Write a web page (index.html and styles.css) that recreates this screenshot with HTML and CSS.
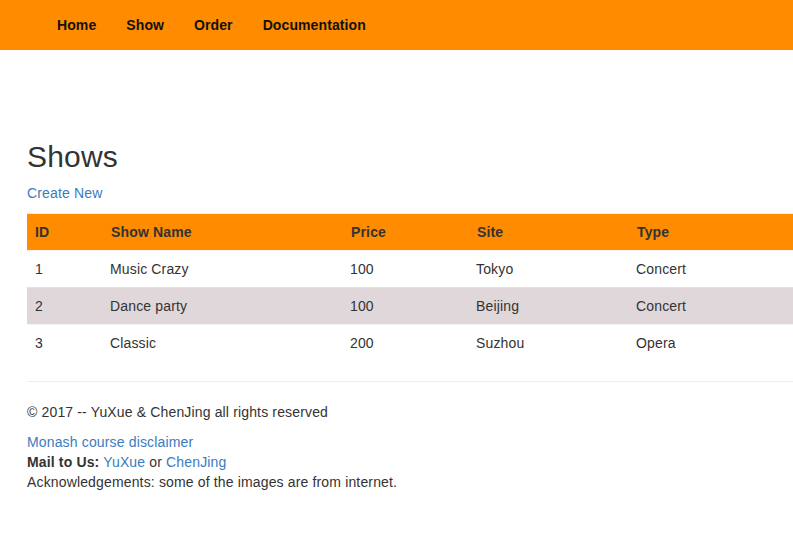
FILE: index.html
```html
<!DOCTYPE html>
<html>
<head>
<meta charset="utf-8">
<title>Shows</title>
<link rel="stylesheet" href="styles.css">
</head>
<body>
<div class="page">
  <nav class="navbar">
    <ul class="nav-links">
      <li><a href="#">Home</a></li>
      <li><a href="#">Show</a></li>
      <li><a href="#">Order</a></li>
      <li><a href="#">Documentation</a></li>
    </ul>
  </nav>
  <main class="content">
    <h2 class="title">Shows</h2>
    <p class="para"><a class="link" href="#">Create New</a></p>
    <table class="shows">
      <thead>
        <tr>
          <th class="c-id">ID</th>
          <th class="c-name">Show Name</th>
          <th class="c-price">Price</th>
          <th class="c-site">Site</th>
          <th class="c-type">Type</th>
        </tr>
      </thead>
      <tbody>
        <tr><td>1</td><td>Music Crazy</td><td>100</td><td>Tokyo</td><td>Concert</td></tr>
        <tr class="alt"><td>2</td><td>Dance party</td><td>100</td><td>Beijing</td><td>Concert</td></tr>
        <tr><td>3</td><td>Classic</td><td>200</td><td>Suzhou</td><td>Opera</td></tr>
      </tbody>
    </table>
    <hr class="rule">
    <footer class="footer">
      <p class="para">&copy; 2017 -- YuXue &amp; ChenJing all rights reserved</p>
      <div class="line"><a class="link" href="#">Monash course disclaimer</a></div>
      <div class="line"><strong>Mail to Us:</strong> <a class="link" href="#">YuXue</a> or <a class="link" href="#">ChenJing</a></div>
      <div class="line">Acknowledgements: some of the images are from internet.</div>
    </footer>
  </main>
</div>
</body>
</html>
```
FILE: styles.css
```css
html, body {
  margin: 0;
  padding: 0;
  background: #fff;
}
body {
  font-family: "Liberation Sans", Arial, sans-serif;
  font-size: 14px;
  line-height: 20px;
  color: #333;
  letter-spacing: 0.15px;
  overflow: hidden;
}
.page {
  width: 793px;
  overflow: hidden;
}
.navbar {
  height: 50px;
  background: #ff8c00;
  padding-left: 42px;
}
.nav-links {
  list-style: none;
  margin: 0;
  padding: 0;
  display: flex;
}
.nav-links a {
  display: block;
  padding: 15px 15px;
  line-height: 20px;
  font-weight: bold;
  color: #111;
  letter-spacing: 0.1px;
  text-decoration: none;
}
.content {
  padding: 90px 0 0 27px;
}
.title {
  margin: 0 0 10px;
  font-size: 30px;
  font-weight: 500;
  line-height: 33px;
  color: #333;
  letter-spacing: 0.2px;
}
.para {
  margin: 0 0 10px;
}
.link {
  color: #3a7bbf;
  text-decoration: none;
}
.shows {
  width: 1100px;
  border-collapse: collapse;
  border-spacing: 0;
  margin-bottom: 20px;
  border-top: 1px solid #eee;
}
.shows th {
  background: #ff8c00;
  color: #333;
  font-weight: bold;
  text-align: left;
  padding: 8px;
  line-height: 20px;
}
.shows td {
  padding: 8px 8px 8px 7px;
  line-height: 20px;
  border-top: 1px solid #f2f2f2;
}
.shows td:first-child {
  padding-left: 8px;
}
.shows tr.alt td {
  background: #dfd7d9;
  border-top-color: #e6e0e1;
}
.c-id { width: 60px; }
.c-name { width: 224px; }
.c-price { width: 110px; }
.c-site { width: 144px; }
.rule {
  margin: 0 0 20px;
  border: 0;
  border-top: 1px solid #eee;
  width: 1100px;
}
.footer {
  margin: 0;
}
.line {
  line-height: 20px;
}
```
